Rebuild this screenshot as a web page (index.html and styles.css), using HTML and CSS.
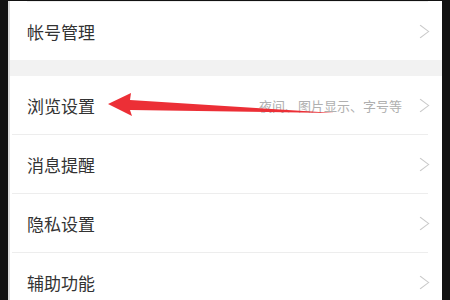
FILE: index.html
```html
<!DOCTYPE html>
<html lang="zh-CN">
<head>
    <meta charset="UTF-8">
    <meta name="viewport" content="width=device-width, initial-scale=1.0">
    <title>设置</title>
    <link rel="stylesheet" href="styles.css">
</head>
<body>
    <div class="screen">
        <div class="line top"></div>
        <div class="row">
            <span class="label">帐号管理</span>
            <span class="chev"></span>
        </div>
        <div class="gap"></div>
        <div class="row">
            <span class="label">浏览设置</span>
            <span class="hint">夜间、图片显示、字号等</span>
            <span class="chev"></span>
        </div>
        <div class="line"></div>
        <div class="row">
            <span class="label">消息提醒</span>
            <span class="chev"></span>
        </div>
        <div class="line"></div>
        <div class="row">
            <span class="label">隐私设置</span>
            <span class="chev"></span>
        </div>
        <div class="line"></div>
        <div class="row">
            <span class="label">辅助功能</span>
            <span class="chev"></span>
        </div>
    </div>

    <!-- red annotation arrow -->
    <svg class="arrow" width="450" height="300" viewBox="0 0 450 300">
        <polygon points="108,104 131,93 130,100 335,113 130,110 132,116" fill="#ec2f36"/>
    </svg>
</body>
</html>
```

FILE: styles.css
```css
body {
    margin: 0;
    background: #121212;
    font-family: "Noto Sans CJK SC", "Noto Sans", sans-serif;
    position: relative;
    height: 300px;
    overflow: hidden;
}
.screen {
    margin: 0 8px;
    background: #fff;
    border-left: 2px solid #dcdcdc;
    height: 300px;
}
.line {
    height: 1px;
    background: #ededed;
    margin: 0 14px 0 2px;
}
.line.top {
    margin-top: 1px;
    margin-left: 17px;
}
.row {
    display: flex;
    align-items: center;
    height: 58px;
    padding: 0 14px 0 17px;
}
.label {
    font-size: 17px;
    color: #333;
    flex: 1;
}
.hint {
    font-size: 13px;
    color: #b0b0b0;
    margin-right: 17px;
}
.chev {
    width: 9px;
    height: 16px;
    position: relative;
}
.chev::before {
    content: "";
    position: absolute;
    left: -4px;
    top: 3px;
    width: 10px;
    height: 10px;
    border-top: 1px solid #c8c8c8;
    border-right: 1px solid #c8c8c8;
    transform: rotate(45deg) skew(-8deg, -8deg);
}
.gap {
    height: 16px;
    background: #f2f2f2;
}
.arrow {
    position: absolute;
    left: 0;
    top: 0;
}
```
